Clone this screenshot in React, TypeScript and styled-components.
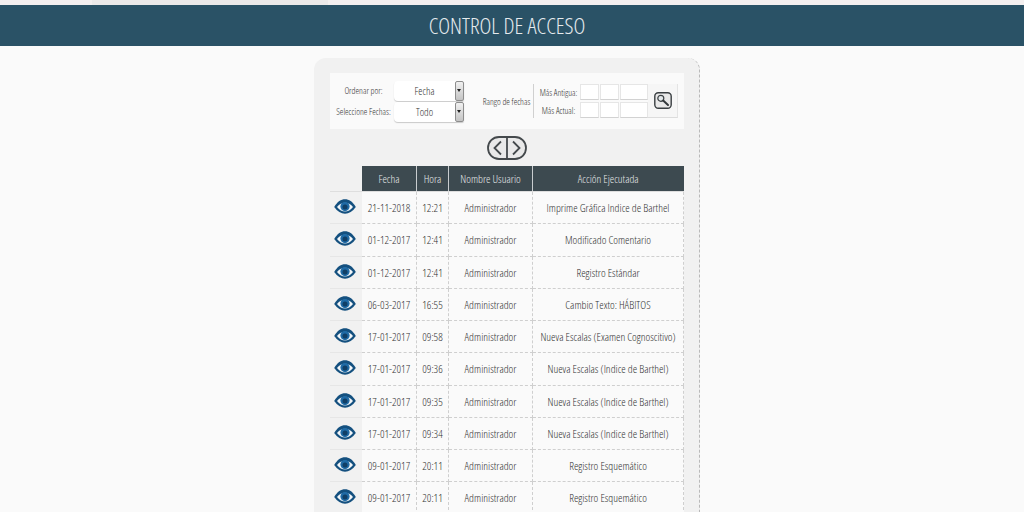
import styled, {createGlobalStyle} from 'styled-components';

const rows = [
  ['21-11-2018', '12:21', 'Administrador', 'Imprime Gráfica Indice de Barthel'],
  ['01-12-2017', '12:41', 'Administrador', 'Modificado Comentario'],
  ['01-12-2017', '12:41', 'Administrador', 'Registro Estándar'],
  ['06-03-2017', '16:55', 'Administrador', 'Cambio Texto: HÁBITOS'],
  ['17-01-2017', '09:58', 'Administrador', 'Nueva Escalas (Examen Cognoscitivo)'],
  ['17-01-2017', '09:36', 'Administrador', 'Nueva Escalas (Indice de Barthel)'],
  ['17-01-2017', '09:35', 'Administrador', 'Nueva Escalas (Indice de Barthel)'],
  ['17-01-2017', '09:34', 'Administrador', 'Nueva Escalas (Indice de Barthel)'],
  ['09-01-2017', '20:11', 'Administrador', 'Registro Esquemático'],
  ['09-01-2017', '20:11', 'Administrador', 'Registro Esquemático'],
];

const EyeIcon = () => (
  <svg width="22" height="15" viewBox="0 0 22 15">
    <path
      d="M0.2 8 C3.5 2.5 7 0.3 11 0.3 C15 0.3 18.5 2.5 21.8 8 C18.5 12.5 15 14.7 11 14.7 C7 14.7 3.5 12.5 0.2 8 Z"
      fill="#14507f"
    />
    <path
      d="M3 8 C5.5 5.2 8 3.8 11 3.8 C14 3.8 16.5 5.2 19 8 C16.5 11 14 12.6 11 12.6 C8 12.6 5.5 11 3 8 Z"
      fill="#f2f6f9"
    />
    <circle cx="11" cy="7.6" r="4.6" fill="#1f6aa5" />
    <circle cx="11" cy="8" r="2.5" fill="#113f66" />
  </svg>
);

const SearchIcon = () => (
  <svg width="18" height="17" viewBox="0 0 18 17">
    <rect x="0.8" y="0.8" width="16.4" height="15.4" rx="3.5" fill="#e9e9e9" stroke="#3a3f42" strokeWidth="1.4" />
    <circle cx="6.8" cy="6.3" r="3" fill="#e3e8ea" stroke="#3d4245" strokeWidth="1.2" />
    <path d="M9.2 8.6 L14 13" stroke="#33383b" strokeWidth="2" strokeLinecap="round" />
  </svg>
);

const PagerIcon = () => (
  <svg width="40" height="24" viewBox="0 0 40 24">
    <rect x="1" y="1" width="38" height="22" rx="11" fill="#e9e9e9" stroke="#44494c" strokeWidth="1.8" />
    <path d="M20 1 V23" stroke="#44494c" strokeWidth="1.8" />
    <path d="M14 5.5 L7.5 12 L14 18.5" fill="none" stroke="#44494c" strokeWidth="1.8" />
    <path d="M26 5.5 L32.5 12 L26 18.5" fill="none" stroke="#44494c" strokeWidth="1.8" />
  </svg>
);

const App = () => (
  <>
    <GlobalStyle />
    <Page>
      <TopStrip>
        <TopTab />
      </TopStrip>
      <Header>CONTROL DE ACCESO</Header>
      <Panel>
        <Filters>
          <SelectGroup>
            <FieldLabel>Ordenar por:</FieldLabel>
            <Select>
              <SelectValue>Fecha</SelectValue>
              <SelectArrow />
            </Select>
            <FieldLabel>Seleccione Fechas:</FieldLabel>
            <Select>
              <SelectValue>Todo</SelectValue>
              <SelectArrow />
            </Select>
          </SelectGroup>
          <RangeLabel>Rango de fechas</RangeLabel>
          <DateGroup>
            <DateLabel>Más Antigua:</DateLabel>
            <DateBox $width={19} />
            <DateBox $width={19} />
            <DateBox $width={28} />
            <DateLabel>Más Actual:</DateLabel>
            <DateBox $width={19} />
            <DateBox $width={19} />
            <DateBox $width={28} />
          </DateGroup>
          <SearchButton>
            <SearchIcon />
          </SearchButton>
        </Filters>
        <Pager>
          <PagerIcon />
        </Pager>
        <Table>
          <thead>
            <tr>
              <EmptyHead />
              <HeadCell $width={54}>Fecha</HeadCell>
              <HeadCell $width={31}>Hora</HeadCell>
              <HeadCell $width={83}>Nombre Usuario</HeadCell>
              <HeadCell>Acción Ejecutada</HeadCell>
            </tr>
          </thead>
          <tbody>
            {rows.map((row, i) => (
              <tr key={i}>
                <EyeCell>
                  <EyeIcon />
                </EyeCell>
                {row.map((text, j) => (
                  <Cell key={j}>{text}</Cell>
                ))}
              </tr>
            ))}
          </tbody>
        </Table>
      </Panel>
    </Page>
  </>
);

// STYLES

const GlobalStyle = createGlobalStyle`
  html, body {
    margin: 0;
    height: 512px;
    overflow: hidden;
    background: #fafafa;
  }
  body {
    font-family: "Open Sans", "Liberation Sans", sans-serif;
    font-stretch: 75%;
    font-weight: 300;
    color: #333;
  }
`;

const Page = styled.div`
  width: 1024px;
  height: 512px;
  overflow: hidden;
`;

const TopStrip = styled.div`
  height: 5px;
  background: #f3efef;
  padding-left: 92px;
`;

const TopTab = styled.div`
  width: 236px;
  height: 5px;
  background: #ebe9e9;
`;

const Header = styled.h1`
  margin: 0;
  height: 41px;
  padding-right: 10px;
  line-height: 41px;
  background: #2a5266;
  color: #e6ebee;
  text-align: center;
  font-size: 22.5px;
  font-weight: 300;
`;

const Panel = styled.div`
  box-sizing: border-box;
  width: 386px;
  height: 480px;
  margin: 12px 0 0 314px;
  padding: 15px 15px 0 16px;
  background: #f1f1f1;
  border-radius: 12px 12px 0 0;
  border-right: 1px dashed #b9b9b9;
`;

const Filters = styled.div`
  display: flex;
  align-items: center;
  height: 56px;
  width: 354px;
  padding-left: 6px;
  box-sizing: border-box;
  background: #fafafa;
`;

const SelectGroup = styled.div`
  display: grid;
  grid-template-columns: 55px 70px;
  column-gap: 3px;
  row-gap: 1px;
  align-items: center;
`;

const FieldLabel = styled.span`
  font-size: 9px;
  text-align: center;
  white-space: nowrap;
`;

const Select = styled.div`
  display: flex;
  height: 20px;
  background: #fff;
  border-radius: 4px 2px 2px 4px;
  box-shadow: 0 1px 1px #c9c9c9;
`;

const SelectValue = styled.span`
  flex: 1;
  font-size: 10.5px;
  line-height: 20px;
  text-align: center;
`;

const SelectArrow = styled.span`
  position: relative;
  box-sizing: border-box;
  width: 9px;
  border: 1px solid #8d8d8d;
  border-radius: 2px;
  background: linear-gradient(#f1f1f1, #c4c4c4);

  &::after {
    content: '';
    position: absolute;
    top: 7px;
    left: 1px;
    border: 2.5px solid transparent;
    border-top: 3px solid #222;
  }
`;

const RangeLabel = styled.span`
  margin-left: 18px;
  width: 49px;
  font-size: 9px;
  white-space: nowrap;
  text-align: center;
`;

const DateGroup = styled.div`
  display: grid;
  grid-template-columns: 41px auto auto auto;
  column-gap: 1px;
  row-gap: 2px;
  align-items: center;
  margin-left: 2px;
  padding-left: 4px;
  border-left: 1px solid #d0d0d0;
`;

const DateLabel = styled.span`
  font-size: 9px;
  text-align: center;
  white-space: nowrap;
`;

const DateBox = styled.span<{$width: number}>`
  display: block;
  box-sizing: border-box;
  width: ${({$width}) => $width}px;
  height: 16px;
  background: #fff;
  border: 1px solid #e6e6e6;
  border-bottom-color: #d2d2d2;
`;

const SearchButton = styled.button`
  display: flex;
  align-items: center;
  justify-content: center;
  width: 30px;
  height: 34px;
  padding: 0;
  background: #f6f6f6;
  border: 0;
  border-bottom: 1px solid #dcdcdc;
  border-right: 1px solid #e4e4e4;
`;

const Pager = styled.div`
  display: flex;
  justify-content: center;
  height: 37px;
  padding-top: 7px;
  box-sizing: border-box;
`;

const Table = styled.table`
  width: 354px;
  border-collapse: collapse;
  table-layout: fixed;
`;

const EmptyHead = styled.th`
  width: 32px;
  height: 25px;
  padding: 0;
  border-bottom: 1px solid #dedede;
`;

const HeadCell = styled.th<{$width?: number}>`
  ${({$width}) => ($width ? `width: ${$width}px;` : '')}
  height: 25px;
  padding: 0;
  background: #3d4a50;
  color: #e4e7e8;
  font-size: 11.2px;
  font-weight: 300;
  border-left: 1px solid #c9cdcf;
  border-bottom: 1px solid #dedede;

  &:nth-child(2) {
    border-left: 0;
  }
`;

const EyeCell = styled.td`
  height: 32.25px;
  padding: 0;
  box-sizing: border-box;
  text-align: center;
  border-bottom: 1px solid #e6e6e6;

  svg {
    display: block;
    margin: 0 auto 2px 4px;
  }
`;

const Cell = styled.td`
  height: 32.25px;
  padding: 0;
  box-sizing: border-box;
  background: #fafafa;
  font-size: 11.2px;
  text-align: center;
  white-space: nowrap;
  border: 1px dashed #cfcfcf;
  border-top: 0;

  &:nth-child(2) {
    border-left: 0;
  }
`;

export default App;
